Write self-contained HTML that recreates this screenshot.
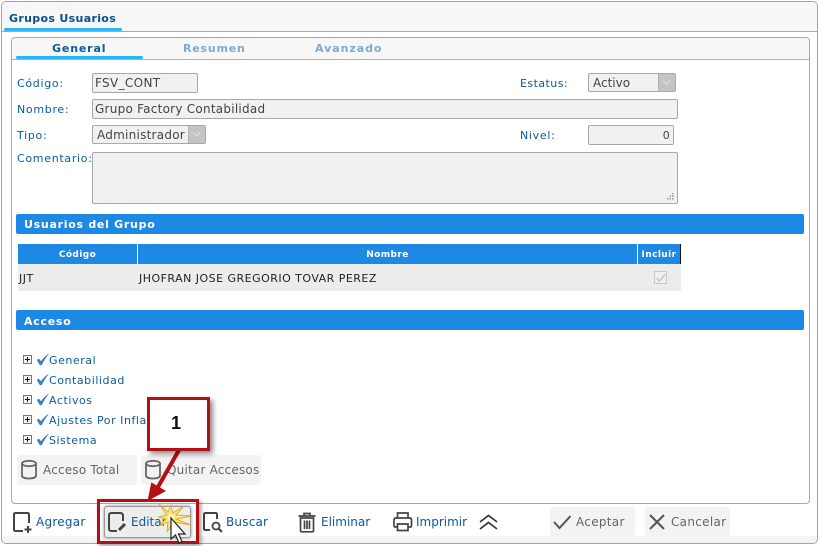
<!DOCTYPE html>
<html><head><meta charset="utf-8">
<style>
html,body{margin:0;padding:0;width:819px;height:546px;overflow:hidden;background:#fff}
*{box-sizing:border-box}
body{font-family:"DejaVu Sans","Liberation Sans",sans-serif;font-size:11px;color:#444}
.a{position:absolute}
.t{position:absolute;white-space:nowrap;line-height:14px}
.lb{color:#0a5a9c;font-size:11px;letter-spacing:.7px}
.f{position:absolute;background:#f1f1f1;border:1px solid #a8a8a8;border-radius:2px;font-size:12px;color:#444;line-height:19px;padding-left:2px;white-space:nowrap;letter-spacing:.25px}
.bar{position:absolute;left:16px;width:788px;height:20px;background:#1e88e5;border-radius:2px;color:#fff;font-weight:bold;font-size:11px;line-height:22px;padding-left:8px;letter-spacing:.72px}
.th{position:absolute;top:244px;height:20px;background:#1e88e5;color:#fff;font-weight:bold;font-size:9px;line-height:22px;text-align:center;letter-spacing:.4px}
.arrow{position:absolute;background:#c4c4c4;border-left:1px solid #b0b0b0}
.tree{position:absolute;left:49px;color:#0a5a9c;font-size:11px;letter-spacing:.55px;line-height:14px;white-space:nowrap}
.btn{position:absolute;background:#f3f3f3;border-radius:3px;color:#666;font-size:12px;height:30px;line-height:31px;white-space:nowrap;letter-spacing:.2px}
.lnk{position:absolute;color:#0a5a9c;font-size:12px;line-height:14px;white-space:nowrap}
svg{position:absolute;overflow:visible}
</style></head>
<body>
<!-- outer panel -->
<div class="a" style="left:1px;top:1px;width:817px;height:543px;border:1px solid #a3a3a3;border-radius:5px;background:#fff"></div>
<div class="a" style="left:2px;top:2px;width:815px;height:30px;background:#f7f7f7;border-bottom:1px solid #a8a8a8;border-radius:4px 4px 0 0"></div>
<div class="a" style="left:2px;top:536px;width:815px;height:7px;background:#f3f5f6;border-radius:0 0 4px 4px"></div>
<div class="t" style="left:9px;top:12px;font-weight:bold;font-size:11px;color:#0a4f8c;letter-spacing:.33px">Grupos Usuarios</div>
<div class="a" style="left:4px;top:28px;width:118px;height:3px;background:#29b6f6;border-radius:2px"></div>
<!-- inner panel -->
<div class="a" style="left:11px;top:37px;width:799px;height:467px;border:1px solid #a8a8a8;border-radius:4px;background:#fff"></div>
<div class="a" style="left:12px;top:38px;width:797px;height:22px;background:#f7f7f7;border-bottom:1px solid #b0b0b0;border-radius:3px 3px 0 0"></div>
<div class="t" style="left:52px;top:42px;font-weight:bold;font-size:11px;color:#0a5a9c;letter-spacing:.85px">General</div>
<div class="t" style="left:183px;top:42px;font-weight:bold;font-size:11px;color:#7faad0;letter-spacing:.8px">Resumen</div>
<div class="t" style="left:315px;top:42px;font-weight:bold;font-size:11px;color:#7faad0;letter-spacing:.95px">Avanzado</div>
<div class="a" style="left:16px;top:56px;width:127px;height:3px;background:#29b6f6;border-radius:2px"></div>
<!-- form -->
<div class="t lb" style="left:17px;top:77px">Código:</div>
<div class="f" style="left:92px;top:73px;width:106px;height:20px;letter-spacing:.35px">FSV_CONT</div>
<div class="t lb" style="left:520px;top:77px;letter-spacing:.45px">Estatus:</div>
<div class="f" style="left:588px;top:73px;width:88px;height:19px;padding-left:4px;line-height:18px;letter-spacing:0">Activo</div>
<div class="arrow" style="left:658px;top:74px;width:17px;height:17px"></div>
<svg style="left:662px;top:80px" width="9" height="5"><path d="M1 0.5L4.5 4L8 0.5" fill="none" stroke="#e2e2e2"/></svg>
<div class="t lb" style="left:17px;top:103px">Nombre:</div>
<div class="f" style="left:92px;top:99px;width:586px;height:20px">Grupo Factory Contabilidad</div>
<div class="t lb" style="left:17px;top:129px">Tipo:</div>
<div class="f" style="left:92px;top:125px;width:114px;height:19px;padding-left:4px;line-height:18px">Administrador</div>
<div class="arrow" style="left:188px;top:126px;width:17px;height:17px"></div>
<svg style="left:192px;top:132px" width="9" height="5"><path d="M1 0.5L4.5 4L8 0.5" fill="none" stroke="#e2e2e2"/></svg>
<div class="t lb" style="left:520px;top:129px">Nivel:</div>
<div class="f" style="left:588px;top:125px;width:86px;height:20px;text-align:right;padding-right:3px;font-size:11px">0</div>
<div class="t lb" style="left:17px;top:152px">Comentario:</div>
<div class="f" style="left:92px;top:152px;width:586px;height:52px"></div>
<svg style="left:666px;top:192px" width="10" height="10" fill="#999"><rect x="6" y="1" width="1.5" height="1.5"/><rect x="3.5" y="3.5" width="1.5" height="1.5"/><rect x="6" y="3.5" width="1.5" height="1.5"/><rect x="1" y="6" width="1.5" height="1.5"/><rect x="3.5" y="6" width="1.5" height="1.5"/><rect x="6" y="6" width="1.5" height="1.5"/></svg>
<!-- usuarios -->
<div class="bar" style="top:214px">Usuarios del Grupo</div>
<div class="th" style="left:18px;width:119px">Código</div>
<div class="th" style="left:138px;width:499px">Nombre</div>
<div class="th" style="left:638px;width:42px;border-right:0">Incluir</div>
<div class="a" style="left:680px;top:244px;width:1px;height:20px;background:#111"></div>
<div class="a" style="left:18px;top:264px;width:663px;height:27px;background:#ececec"></div>
<div class="t" style="left:19px;top:272px;font-size:11px;color:#222;letter-spacing:.48px">JJT</div>
<div class="t" style="left:139px;top:272px;font-size:11px;color:#222;letter-spacing:.48px">JHOFRAN JOSE GREGORIO TOVAR PEREZ</div>
<div class="a" style="left:654px;top:271px;width:13px;height:13px;border:1px solid #c8c8c8;background:#f0f0f0"></div>
<svg style="left:654px;top:271px" width="13" height="13"><path d="M2.500 7L5.500 10L11 3.500" fill="none" stroke="#bbb" stroke-width="1.200"/></svg>
<!-- acceso -->
<div class="bar" style="top:310px;line-height:23px">Acceso</div>
<!-- tree -->
<svg style="left:23px;top:355px" width="40" height="90">
<g fill="#f2f2f2" stroke="#777"><rect x=".5" y=".5" width="8" height="8"/><rect x=".5" y="20.500" width="8" height="8"/><rect x=".5" y="40.500" width="8" height="8"/><rect x=".5" y="60.500" width="8" height="8"/><rect x=".5" y="80.500" width="8" height="8"/></g>
<g stroke="#111" fill="none"><path d="M2 4.500H7M4.500 2V7M2 24.500H7M4.500 22V27M2 44.500H7M4.500 42V47M2 64.500H7M4.500 62V67M2 84.500H7M4.500 82V87"/></g>
<g fill="#3f7fc4" stroke="#2f69ad" stroke-width=".4"><path d="M14 5L16 4L18 6.500C20 3.500 22.500 1 25.500 -1C23 2 20.500 6 18.500 10H17Z"/><path d="M14 25L16 24L18 26.500C20 23.500 22.500 21 25.500 19C23 22 20.500 26 18.500 30H17Z"/><path d="M14 45L16 44L18 46.500C20 43.500 22.500 41 25.500 39C23 42 20.500 46 18.500 50H17Z"/><path d="M14 65L16 64L18 66.500C20 63.500 22.500 61 25.500 59C23 62 20.500 66 18.500 70H17Z"/><path d="M14 85L16 84L18 86.500C20 83.500 22.500 81 25.500 79C23 82 20.500 86 18.500 90H17Z"/></g>
</svg>
<div class="tree" style="top:354px">General</div>
<div class="tree" style="top:374px">Contabilidad</div>
<div class="tree" style="top:394px">Activos</div>
<div class="tree" style="top:414px">Ajustes Por Inflación</div>
<div class="tree" style="top:434px">Sistema</div>
<!-- acceso buttons -->
<div class="btn" style="left:17px;top:455px;width:120px;padding-left:26px">Acceso Total</div>
<div class="btn" style="left:141px;top:455px;width:120px;padding-left:26px">Quitar Accesos</div>
<svg style="left:20px;top:460px" width="20" height="20" fill="none" stroke="#666" stroke-width="1.800"><ellipse cx="9" cy="3.500" rx="7" ry="2.700"/><path d="M2 3.500V15.500C2 17.500 5 18.500 9 18.500S16 17.500 16 15.500V3.500"/></svg>
<svg style="left:144px;top:460px" width="20" height="20" fill="none" stroke="#666" stroke-width="1.800"><ellipse cx="9" cy="3.500" rx="7" ry="2.700"/><path d="M2 3.500V15.500C2 17.500 5 18.500 9 18.500S16 17.500 16 15.500V3.500"/></svg>
<!-- bottom toolbar -->
<svg style="left:13px;top:512px" width="20" height="22" fill="none" stroke="#444" stroke-width="2"><path d="M10 19H2.500Q1 19 1 17.500V2.500Q1 1 2.500 1H14.500Q16 1 16 2.500V11"/><path d="M15 14V21M11.500 17.500H18.500"/></svg>
<div class="lnk" style="left:36px;top:515px;letter-spacing:.25px">Agregar</div>
<div class="a" style="left:104px;top:506px;width:87px;height:32px;background:#ededed;border:1px solid #999;border-radius:3px;box-shadow:0 0 3px #888"></div>
<svg style="left:108px;top:512px" width="20" height="22" fill="none" stroke="#444" stroke-width="2"><path d="M9 19H3.500Q1 19 1 16.500V3.500Q1 1 3.500 1H12Q15 1 15 4V9"/><path d="M11 18L17 12" stroke-width="3"/></svg>
<div class="lnk" style="left:131px;top:515px">Editar</div>
<svg style="left:203px;top:512px" width="22" height="22" fill="none" stroke="#444" stroke-width="2"><path d="M7 18H2.500Q1 18 1 16.500V2.500Q1 1 2.500 1H12.500Q14 1 14 2.500V7"/><circle cx="13" cy="14" r="3.500" stroke-width="1.800"/><path d="M15.500 16.500L19 20" stroke-width="2.200"/></svg>
<div class="lnk" style="left:226px;top:515px;letter-spacing:.2px">Buscar</div>
<svg style="left:298px;top:512px" width="19" height="21" fill="none" stroke="#444" stroke-width="1.700"><path d="M0.500 4H17.500M6 4V1.500H12V4"/><path d="M2.500 6V18.500Q2.500 19.800 4 19.800H14Q15.500 19.800 15.500 18.500V6Z"/><path d="M6.500 8.500V17M9 8.500V17M11.500 8.500V17"/></svg>
<div class="lnk" style="left:321px;top:515px">Eliminar</div>
<svg style="left:393px;top:512px" width="20" height="20" fill="none" stroke="#444" stroke-width="1.700"><path d="M4.500 6V1H15V6"/><path d="M4 15H2.500Q1 15 1 13.500V8Q1 6 3 6H16.500Q18.500 6 18.500 8V13.500Q18.500 15 17 15H15.500"/><path d="M4.500 12H15V18.500H4.500Z"/></svg>
<div class="lnk" style="left:416px;top:515px">Imprimir</div>
<svg style="left:479px;top:514px" width="20" height="16" fill="none" stroke="#333" stroke-width="1.700"><path d="M1 8L9.500 1.500L18 8M1 15L9.500 8.500L18 15"/></svg>
<div class="btn" style="left:550px;top:507px;width:85px;padding-left:26px;letter-spacing:.3px">Aceptar</div>
<svg style="left:553px;top:514px" width="19" height="16" fill="none" stroke="#555" stroke-width="2"><path d="M1 8L6.500 14L17.500 2"/></svg>
<div class="btn" style="left:645px;top:507px;width:85px;padding-left:26px;letter-spacing:.3px">Cancelar</div>
<svg style="left:649px;top:514px" width="16" height="16" fill="none" stroke="#555" stroke-width="2"><path d="M1 1L15 15M15 1L1 15"/></svg>
<!-- annotation -->
<svg style="left:0;top:0" width="819" height="546">
<path d="M179 450L154 494" stroke="#b30f14" stroke-width="4" fill="none"/>
<path d="M149 499L152 484L164 491Z" fill="#b30f14" stroke="#b30f14" stroke-width="2"/>
</svg>
<div class="a" style="left:147px;top:397px;width:63px;height:54px;background:#fff;border:3px solid #b30f14;box-shadow:3px 3px 5px rgba(0,0,0,.45);padding-right:5px;text-align:center;font-family:'Liberation Sans',sans-serif;font-weight:bold;font-size:18px;line-height:47px;color:#111">1</div>
<div class="a" style="left:97px;top:499px;width:102px;height:45px;border:3px solid #b30f14;box-shadow:2px 2px 4px rgba(0,0,0,.4)"></div>
<svg style="left:155px;top:503px" width="40" height="40">
<path d="M4 1L13 9L16 2L18 10L29 3L21 12L37 13L21 16L36 22L20 19L24 28L17 21L12 29L13 19L4 23L11 16L3 14L12 12Z" fill="#f8e88a" stroke="#e3a81c" stroke-width=".9"/>
<circle cx="16" cy="15" r="3.500" fill="#fdf6c0"/>
<path d="M16 15L16 36L20.500 32L24 40L27 38.500L23.500 31L30 31Z" fill="#fff" stroke="#222" stroke-width="1.200"/>
</svg>
</body></html>
